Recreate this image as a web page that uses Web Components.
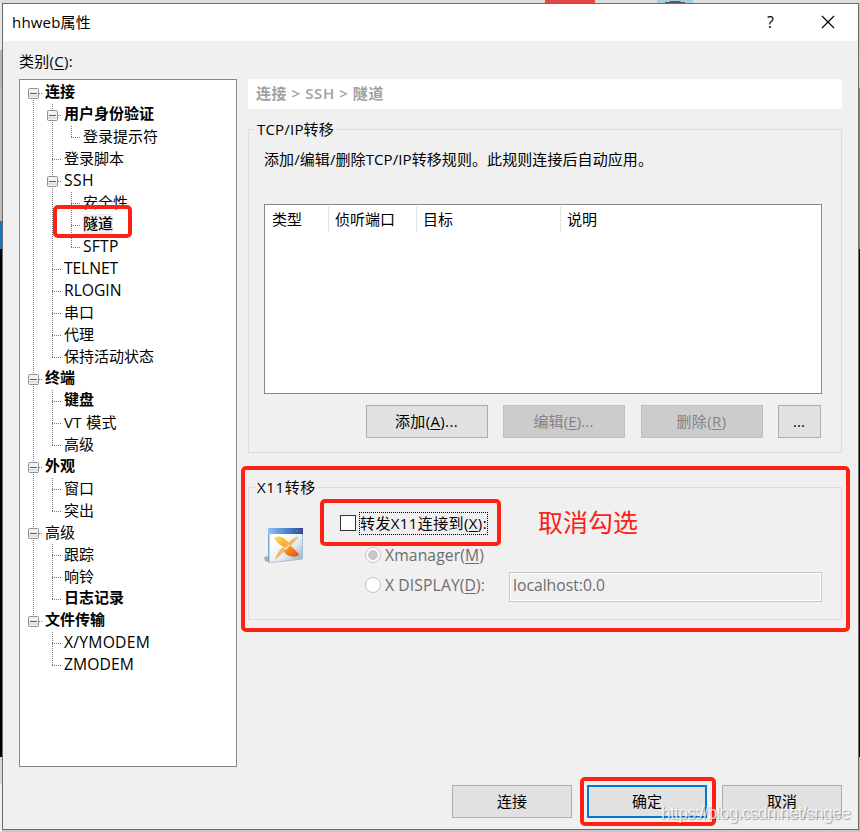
<!DOCTYPE html>
<html lang="zh-CN">
<head>
<meta charset="utf-8">
<title>hhweb属性</title>
<style>
html,body{margin:0;height:100%;overflow:hidden}
body{font:15px/20px "Open Sans","Noto Sans CJK SC",sans-serif;color:#000}
</style>
</head>
<body>
<app-desktop></app-desktop>
<script>
const define = (name, html, setup) => {
  const t = document.createElement('template');
  t.innerHTML = html;
  customElements.define(name, class extends HTMLElement {
    constructor() {
      super();
      this.attachShadow({mode: 'open'}).append(t.content.cloneNode(true));
    }
    connectedCallback() { if (setup) setup(this, this.shadowRoot); }
  });
};

/* Single-line label; w gives the advance width, spread over its letters. */
define('fit-text', `<style>
:host{display:inline-block;white-space:pre;flex:none}
span{display:inline-block}
:host([latin]) span{font-size:15.700px}
::slotted(u){text-decoration:underline;text-decoration-thickness:1px;text-underline-offset:2px}
</style><span><slot></slot></span>`, (el, root) => {
  const w = parseFloat(el.getAttribute('w'));
  if (!w) return;
  const s = root.querySelector('span');
  const natural = s.getBoundingClientRect().width;
  s.style.letterSpacing = ((w - natural) / el.textContent.length) + 'px';
  el.style.width = w + 'px';
});

/* Tree row; guides holds one code per 19px column:
   F/E/L expander (first, middle, last), | line, t tee, l corner, . blank */
define('tree-row', `<style>
:host{display:flex;height:22px;line-height:22px}
i{display:block;position:relative;width:19px;height:22px;flex:none}
i::before,i::after{content:"";position:absolute}
.v::before,.t::before,.l::before,.F::before,.E::before,.L::before{left:9px;width:1px;top:0;bottom:0;background:repeating-linear-gradient(#777 0 1px,transparent 1px 2px)}
.l::before,.L::before{bottom:10px}
.F::before{top:12px}
.t::after,.l::after,.F::after,.E::after,.L::after{left:9px;right:1px;top:11px;height:1px;background:repeating-linear-gradient(90deg,#777 0 1px,transparent 1px 2px)}
svg{position:absolute;left:4px;top:6px;z-index:1}
.text{padding-left:2px;margin-top:-1px}
:host([bold]) .text{font-weight:700;margin-top:-2px}
:host([selected]) .text{margin-top:-2px}
:host([selected]) fit-text{background:#efefef;height:20px;line-height:19px;margin-top:2px;font-weight:500}
</style><span class="text"><fit-text><slot></slot></fit-text></span>`, (el, root) => {
  const text = root.querySelector('.text');
  for (const c of el.getAttribute('guides')) {
    const i = document.createElement('i');
    i.className = c === '|' ? 'v' : c;
    if ('FEL'.includes(c)) i.innerHTML = '<svg width="11" height="11"><rect x=".5" y=".5" width="10" height="10" rx="1" fill="#f3f3f3" stroke="#919191"/><path d="M1 8.5h9M1 7.5h9" stroke="#dfdfdf"/><path d="M2 5.5h7" stroke="#3c5ba7"/></svg>';
    root.insertBefore(i, text);
  }
  const w = parseFloat(el.getAttribute('w'));
  const f = root.querySelector('fit-text'), s = f.shadowRoot.querySelector('span');
  if (/^[\x20-\x7e]+$/.test(el.textContent)) f.setAttribute('latin', '');
  const n = s.getBoundingClientRect().width;
  s.style.letterSpacing = ((w - n) / el.textContent.length) + 'px';
});

const rows = [
 ['F','连接',30,1],['|E','用户身份验证',90,1],['||l','登录提示符',75],['|t','登录脚本',60],['|E','SSH',30],
 ['||t','安全性',45],['||t','隧道',30,2],['||l','SFTP',35.5],['|t','TELNET',54],['|t','RLOGIN',57.5],['|t','串口',30],
 ['|t','代理',30],['|l','保持活动状态',90],['E','终端',30,1],['|t','键盘',30,1],['|t','VT 模式',53],['|l','高级',30],
 ['E','外观',30,1],['|t','窗口',30],['|l','突出',30],['E','高级',30],['|t','跟踪',30],['|t','响铃',30],
 ['|l','日志记录',60,1],['L','文件传输',60,1],['.t','X/YMODEM',86],['.l','ZMODEM',70]];

define('category-tree', `<style>
:host{display:block;box-sizing:border-box;width:218px;height:688px;border:1px solid #828790;background:#fff;padding:2px 0 0 4px}
</style>` + rows.map(([g, t, w, k]) => `<tree-row guides="${g}" w="${w}"${k === 1 ? ' bold' : k === 2 ? ' selected' : ''}>${t}</tree-row>`).join(''));

define('push-button', `<style>
:host{display:flex;box-sizing:border-box;width:122px;height:33px;align-items:center;justify-content:center;border:1px solid #adadad;background:#e1e1e1;padding:0 1px 1px 0}
:host([disabled]){border-color:#bfbfbf;background:#ccc;color:#838383}
:host([small]){width:43px}
:host([wide]){width:120px;padding-right:0}
:host([default]){border:2px solid #0078d7}
</style><slot></slot>`);

define('group-box', `<style>
:host{display:block;position:relative;box-sizing:border-box;border:1px solid #dcdcdc;width:594px}
.legend{position:absolute;left:6px;top:-11px;padding:0 2px;background:#f0f0f0;height:20px}
</style><div class="legend"><slot name="legend"></slot></div><slot></slot>`);

define('rule-table', `<style>
:host{display:block;box-sizing:border-box;width:558px;height:190px;border:1px solid #828790;background:#fff}
.head{display:grid;grid-template-columns:64px 88px 144px 1fr;height:26px;padding-top:1px}
.head div{border-right:1px solid #e2e2e2;padding:3px 0 0 7px}
.head div:not(:first-child){padding-left:6px}
.head div:last-child{border:0}
</style><div class="head"><div><fit-text w="30">类型</fit-text></div><div><fit-text w="60">侦听端口</fit-text></div><div><fit-text w="30">目标</fit-text></div><div><fit-text w="30">说明</fit-text></div></div>`);

define('xmanager-icon', `<style>:host{display:block;width:40px;height:38px}</style>
<svg width="40" height="38" viewBox="0 0 40 38"><defs>
<linearGradient id="a"><stop stop-color="#8fc5ef"/><stop offset=".5" stop-color="#5387d0"/><stop offset="1" stop-color="#214ba0"/></linearGradient>
<linearGradient id="b" x1="0" y1="0" x2="1" y2="1"><stop offset=".3" stop-color="#fff"/><stop offset=".65" stop-color="#e1e9ef"/><stop offset="1" stop-color="#8ba6b9"/></linearGradient>
<linearGradient id="c" x2="1" y2="1"><stop stop-color="#ffdd63"/><stop offset=".5" stop-color="#fb9e22"/><stop offset="1" stop-color="#e7460c"/></linearGradient></defs>
<path d="M0 30l5-1v6l-4-1z" fill="#a9adb0"/>
<path d="M4.500 2.500H38.500v29.500L22 34 4.500 35.500z" fill="url(#b)" stroke="#9db6cb" stroke-width=".8"/>
<path d="M4 1h35v6H4z" fill="url(#a)"/><path d="M4 7v28h1.500V7z" fill="#76a7db"/>
<path d="M32 3h2v2h-2z" fill="#21a84e"/><path d="M35 3h2v2h-2z" fill="#ee2945"/>
<path d="M10 11C15 8 20 10 24 15L27 19 35 27Q33 31 26 29C20 28 20 23 18 19Q14 17 10 11z" fill="url(#c)"/>
<path d="M35 9C27 12 13 23 11 33 18 26 29 18 35 9z" fill="#f4b75c"/>
<path d="M18 19q3 3 4 3l3-4" stroke="#fff3c2" stroke-width="1" fill="none"/></svg>`);

define('option-mark', `<style>
:host{display:block;box-sizing:border-box;width:16px;height:16px;flex:none;background:#fff;border:1px solid #333}
:host([radio]){border:1px solid #c3c3c3;border-radius:50%}
:host([checked]){background:radial-gradient(circle,#c8c8c8 0 4.600px,#fff 5.200px)}
</style>`);

define('tunnel-page', `<style>
:host{display:flex;flex-direction:column;width:594px}
.crumb{height:30px;background:#fff;padding-left:8px;box-sizing:border-box;line-height:29px;color:#a0a0a0;font-weight:600;margin-bottom:20px}
.g1{height:324px;padding:20px 0 0 15px;margin-bottom:34px}
.desc{height:20px;margin-bottom:34px}
.desc fit-text{position:relative;top:-1px}
.buttons{display:flex;gap:15px;margin:11px 0 0 102px}
.g2{height:133px}
.x{display:grid;grid-template-columns:75px 1fr;padding-left:15px}
xmanager-icon{margin-top:39px}
.opts{padding-top:24px}
.line{display:flex;align-items:center}
.box{margin:-2px 0 0 1px}
.focus{border:1px dotted #000;box-sizing:border-box;width:129px;height:23px;line-height:20px;margin-left:3px}
.radio{padding-left:26px;height:30px;gap:4px;color:#6d6d6d}
.first{margin-top:5px}
.field{box-sizing:border-box;width:313px;height:30px;border:1px solid #c8c8c8;box-shadow:inset 0 0 0 1px #fff;padding:0 0 0 3px;line-height:25px;margin:3px 0 0 20px}
</style>
<div class="crumb"><fit-text w="128">连接 &gt; SSH &gt; 隧道</fit-text></div>
<group-box class="g1"><fit-text slot="legend" w="77">TCP/IP转移</fit-text>
<div class="desc"><fit-text w="389">添加/编辑/删除TCP/IP转移规则。此规则连接后自动应用。</fit-text></div>
<rule-table></rule-table>
<div class="buttons"><push-button><fit-text w="63">添加(<u>A</u>)...</fit-text></push-button><push-button disabled><fit-text w="60">编辑(<u>E</u>)...</fit-text></push-button><push-button disabled style="margin-left:1px"><fit-text w="50">删除(<u>R</u>)</fit-text></push-button><push-button small><fit-text w="12">...</fit-text></push-button></div>
</group-box>
<group-box class="g2"><fit-text slot="legend" w="59">X11转移</fit-text>
<div class="x"><xmanager-icon></xmanager-icon><div class="opts">
<div class="line"><option-mark class="box"></option-mark><div class="focus"><fit-text w="127">转发X11连接到(<u>X</u>):</fit-text></div></div>
<div class="line radio first"><option-mark radio checked></option-mark><fit-text latin w="99">Xmanager(<u>M</u>)</fit-text></div>
<div class="line radio"><option-mark radio></option-mark><fit-text latin w="100">X DISPLAY(<u>D</u>):</fit-text><div class="field"><fit-text latin w="92">localhost:0.0</fit-text></div></div>
</div></div></group-box>`);

define('title-bar', `<style>
:host{display:flex;align-items:center;height:37px;background:#fff;padding:0 23px 0 9px}
fit-text,.help{margin-top:-2px}
.help{margin-left:auto;margin-right:47px;font-size:16px}
svg{margin-top:-1px}
</style><fit-text w="79">hhweb属性</fit-text><span class="help">?</span>
<svg width="14" height="14" viewBox="0 0 14 14"><path d="M1 1l12 12M13 1L1 13" stroke="#000" stroke-width="1.150"/></svg>`);

define('property-dialog', `<style>
:host{display:block;box-sizing:border-box;width:857px;height:827px;border:1px solid #6c6c6c;background:#f0f0f0}
.cat{padding:10px 0 0 16px;height:28px;box-sizing:content-box}
.main{display:flex;gap:11px;padding-left:16px;height:688px}
.actions{display:flex;gap:15px;justify-content:flex-end;margin:18px 16px 0 0}
</style><title-bar></title-bar>
<div class="cat"><fit-text w="54">类别(<u>C</u>):</fit-text></div>
<div class="main"><category-tree></category-tree><tunnel-page></tunnel-page></div>
<div class="actions"><push-button wide><fit-text w="30">连接</fit-text></push-button><push-button wide default><fit-text w="30">确定</fit-text></push-button><push-button wide><fit-text w="30">取消</fit-text></push-button></div>`);

/* Red marker frame drawn over the dialog */
define('mark-frame', `<style>:host{position:absolute;box-sizing:border-box;border:4px solid #ff2113;border-radius:5px}</style>`);

define('app-desktop', `<style>
:host{display:block;position:relative;width:860px;height:832px;box-sizing:border-box;padding:3px 0 0 2px;
background:
linear-gradient(#e34747,#e34747) 545px 0/50px 3px no-repeat,
radial-gradient(ellipse at 50% 100%,#675454 0 10px,#a3cfdd 11px) 657px 0/36px 3px no-repeat,
linear-gradient(#dedede,#dedede) 0 0/860px 3px no-repeat,
linear-gradient(#e6e6e6 0 50px,#b5b5b5 50px 88px,#bdbdbd 88px 221px,#0d78c3 221px 249px,#000 249px 757px,#d6d6d6 757px 784px,#eee 784px) 0 0/2px 832px no-repeat,
linear-gradient(#c4c4c4 0 50px,#cecece 50px 88px,#858585 88px 249px,#000 249px 757px,#b5b5b5 757px) 859px 0/1px 832px no-repeat,#c9c9c9}
.note{position:absolute;left:538px;top:504px;font-size:25px;line-height:36px;color:#ff2113}
.wm{position:absolute;left:661px;top:802px;font:17.500px/22px "Liberation Sans",sans-serif;color:rgba(255,255,255,.8);text-shadow:1px 1px 1px rgba(0,0,0,.32)}
</style><property-dialog></property-dialog>
<mark-frame style="left:53px;top:205px;width:79px;height:33px"></mark-frame>
<mark-frame style="left:240.500px;top:466px;width:609px;height:165.500px"></mark-frame>
<mark-frame style="left:319.500px;top:499px;width:181px;height:47px"></mark-frame>
<mark-frame style="left:579.500px;top:777px;width:136px;height:49px"></mark-frame>
<fit-text class="note" w="100">取消勾选</fit-text>
<fit-text class="wm" w="189">https://blog.csdn.net/sngee</fit-text>`);
</script>
</body>
</html>
